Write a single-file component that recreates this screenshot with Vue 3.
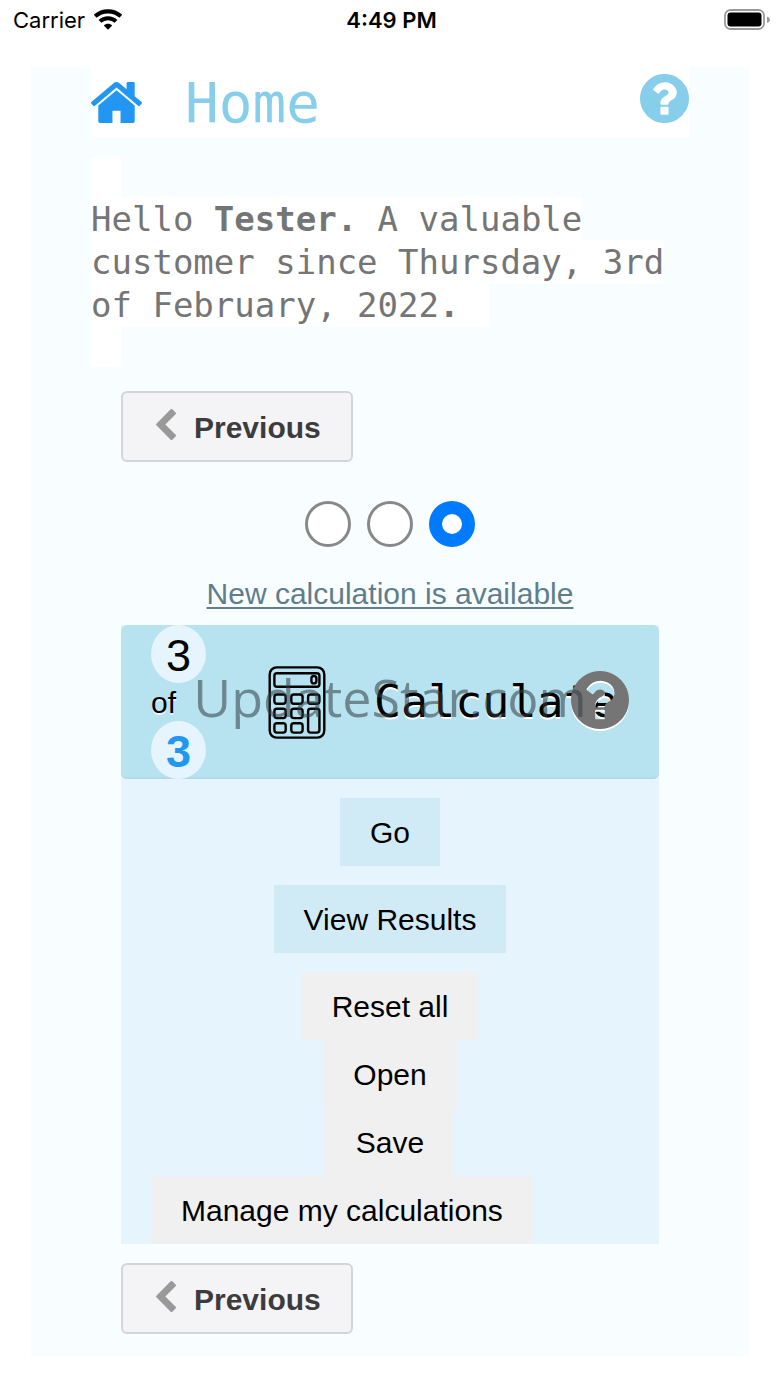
<script setup>
import { ref } from 'vue'

const step = ref(3)
const steps = [1, 2, 3]

const help =
  'M1024 1376v-192q0-14-9-23t-23-9h-192q-14 0-23 9t-9 23v192q0 14 9 23t23 9h192q14 0 23-9t9-23zm256-672q0-88-55.5-163t-138.5-116-170-41q-243 0-371 213-15 24 8 42l132 100q7 6 19 6 16 0 25-12 53-68 86-92 34-24 86-24 48 0 85.5 26t37.5 59q0 38-20 61t-68 45q-63 28-115.5 86.5t-52.5 125.5v36q0 14 9 23t23 9h192q14 0 23-9t9-23q0-19 21.5-49.5t54.5-49.5q32-18 49-28.5t46-35 44.5-48 28-60.5 12.5-81zm384 192q0 209-103 385.5t-279.5 279.5-385.5 103-385.5-103-279.5-279.5-103-385.5 103-385.5 279.5-279.5 385.5-103 385.5 103 279.5 279.5 103 385.5z'
const chevron =
  'M1427 301l-531 531 531 531q19 19 19 45t-19 45l-166 166q-19 19-45 19t-45-19l-742-742q-19-19-19-45t19-45l742-742q19-19 45-19t45 19l166 166q19 19 19 45t-19 45z'
</script>

<template>
  <div class="screen">
    <div class="status">
      <div class="carrier">
        <span>Carrier</span>
        <svg class="wifi" viewBox="0 0 28 21" aria-hidden="true">
          <path d="M1.200 7.300C8.500 .6 19.500 .6 26.800 7.300" fill="none" stroke="#000" stroke-width="4.200" />
          <path d="M6 12.400C10.500 8.200 17.500 8.200 22 12.400" fill="none" stroke="#000" stroke-width="4" />
          <path d="M14 20.800L9.800 16.600C12 14.200 16 14.200 18.200 16.600Z" fill="#000" />
        </svg>
      </div>
      <div class="time">4:49 PM</div>
      <div class="power">
        <svg class="battery" viewBox="0 0 46 21" aria-hidden="true">
          <rect x="1" y="1" width="39" height="19" rx="5.500" fill="#fff" stroke="#999" stroke-width="1.800" />
          <rect x="3.500" y="3.500" width="34" height="14" rx="3" fill="#000" />
          <path d="M43 7.500q3 1 3 3.200t-3 3.200z" fill="#999" />
        </svg>
      </div>
    </div>

    <main class="page">
      <header class="bar">
        <a href="#" class="home" aria-label="Home">
          <svg viewBox="89 253 1614 1283" preserveAspectRatio="none" aria-hidden="true">
            <path fill="#2196f3" d="M1472 992v480q0 26-19 45t-45 19h-384v-384h-256v384h-384q-26 0-45-19t-19-45v-480q0-1 .5-3t.5-3l575-474 575 474q1 2 1 6zm223-69l-62 74q-8 9-21 11h-3q-13 0-21-7l-692-577-692 577q-12 8-24 7-13-2-21-11l-62-74q-8-10-7-23.500t11-21.500l719-599q32-26 76-26t76 26l244 204v-195q0-14 9-23t23-9h192q14 0 23 9t9 23v408l219 182q10 8 11 21.500t-7 23.500z" />
          </svg>
        </a>
        <h1>Home</h1>
        <button type="button" class="help" aria-label="Help">
          <svg viewBox="128 128 1536 1536" aria-hidden="true"><path fill="#87ceeb" :d="help" /></svg>
        </button>
      </header>

      <div class="greeting">
        <p><span>Hello <b>Tester.</b> A valuable customer since Thursday, 3rd of February, 2022<b>.</b></span></p>
      </div>

      <section class="content">
        <button type="button" class="previous">
          <svg viewBox="410 26 1036 1612" aria-hidden="true"><path fill="#999" :d="chevron" /></svg>
          <span>Previous</span>
        </button>

        <div class="steps" role="radiogroup" aria-label="Step">
          <input v-for="n in steps" :key="n" v-model="step" type="radio" name="step" :value="n" :aria-label="'Step ' + n" />
        </div>

        <a href="#" class="notice">New calculation is available</a>

        <article class="card">
          <div class="card-head">
            <div class="count">
              <span class="badge">3</span>
              <span class="of">of</span>
              <span class="badge total">3</span>
            </div>
            <svg class="calculator" viewBox="0 0 58 73" fill="none" stroke="#000" stroke-width="2.400" aria-hidden="true">
              <rect x="1.700" y="1.400" width="54.600" height="70.200" rx="7" />
              <rect x="6.400" y="7.200" width="45" height="13.600" rx="2.500" />
              <rect x="43.400" y="10" width="5" height="7.400" rx="2.500" />
              <rect x="6.400" y="28.500" width="11.300" height="9.200" rx="2.500" />
              <rect x="23.300" y="28.500" width="11.300" height="9.200" rx="2.500" />
              <rect x="40.100" y="28.500" width="11.300" height="9.200" rx="2.500" />
              <rect x="6.400" y="42.700" width="11.300" height="9.400" rx="2.500" />
              <rect x="23.300" y="42.700" width="11.300" height="9.400" rx="2.500" />
              <rect x="6.400" y="57.200" width="11.300" height="9.400" rx="2.500" />
              <rect x="23.300" y="57.200" width="11.300" height="9.400" rx="2.500" />
              <rect x="40.100" y="42.700" width="11.300" height="23.900" rx="2.500" />
            </svg>
            <h2>Calculate</h2>
            <button type="button" class="card-help" aria-label="Help with Calculate">
              <svg viewBox="128 128 1536 1536" aria-hidden="true"><path fill="#757575" :d="help" /></svg>
            </button>
            <div class="watermark">UpdateStar.com</div>
          </div>
          <div class="card-body">
            <button type="button" class="action main">Go</button>
            <button type="button" class="action main">View Results</button>
            <button type="button" class="action">Reset all</button>
            <button type="button" class="action">Open</button>
            <button type="button" class="action">Save</button>
            <button type="button" class="action start">Manage my calculations</button>
          </div>
        </article>

        <button type="button" class="previous">
          <svg viewBox="410 26 1036 1612" aria-hidden="true"><path fill="#999" :d="chevron" /></svg>
          <span>Previous</span>
        </button>
      </section>
    </main>
  </div>
</template>

<style>
body {
  margin: 0;
  background: #fff;
}
</style>

<style scoped>
.screen {
  font-family: "Liberation Sans", Arial, sans-serif;
  font-size: 30px;
  color: #000;
}
button {
  margin: 0;
  padding: 0;
  border: 0;
  background: none;
  font: inherit;
  color: inherit;
}
svg {
  display: block;
}
.status {
  display: grid;
  grid-template-columns: 1fr auto 1fr;
  align-items: center;
  height: 40px;
  padding: 0 10px 0 13px;
  margin-bottom: 27px;
  font-family: Inter, sans-serif;
  font-size: 22px;
}
.carrier {
  display: flex;
  align-items: center;
  gap: 9px;
}
.wifi {
  width: 28px;
  height: 21px;
  margin-bottom: 2px;
}
.time {
  font-weight: 600;
}
.power {
  display: flex;
  justify-content: flex-end;
}
.battery {
  width: 46px;
  height: 21px;
  margin-bottom: 2px;
}
.page {
  margin: 0 31px;
  padding: 0 60px 22px;
  background: #f8feff;
}
.bar {
  display: flex;
  align-items: flex-start;
  height: 70px;
  background: #fff;
}
.home {
  margin-top: 15px;
}
.home svg {
  width: 51px;
  height: 41px;
}
h1 {
  flex: 1;
  margin: 0 0 0 43px;
  font: 400 56px/72px "DejaVu Sans Mono", monospace;
  color: #87ceeb;
}
.help {
  margin-top: 7px;
}
.help svg {
  width: 49px;
  height: 49px;
}
.greeting {
  margin: 21px 0 24px;
  font: 34px/43px "DejaVu Sans Mono", monospace;
  color: #757575;
}
.greeting::before,
.greeting::after {
  content: "";
  display: block;
  width: 30px;
  height: 40px;
  background: #fff;
}
.greeting p {
  margin: 0;
}
.greeting span {
  padding: 2px 30px 2px 0;
  background: #fff;
}
.content {
  display: flex;
  flex-direction: column;
  align-items: flex-start;
  padding: 0 30px;
}
.previous {
  display: flex;
  align-items: center;
  gap: 18px;
  height: 71px;
  padding: 2px 30px 0 33px;
  border: 2px solid #d3d6d8;
  border-radius: 6px;
  background: #f4f4f6;
  font-weight: 700;
  color: #3c3c3e;
}
.previous svg {
  width: 20px;
  height: 31px;
  margin-bottom: 6px;
}
.steps {
  display: flex;
  align-self: center;
  gap: 16px;
  margin: 39px 0 30px;
}
.steps input {
  appearance: none;
  width: 46px;
  height: 46px;
  margin: 0;
  border: 3px solid #888;
  border-radius: 50%;
  background: #fff;
}
.steps input:checked {
  border: 13px solid #007aff;
}
.notice {
  align-self: center;
  line-height: 34px;
  color: #607d8b;
  text-decoration-thickness: 2px;
  text-underline-offset: 3px;
}
.card {
  align-self: stretch;
  margin: 14px 0 19px;
  background: #e6f4fd;
}
.card-head {
  position: relative;
  display: flex;
  align-items: center;
  padding: 0 30px;
  border-radius: 6px;
  background: #b7e3f1;
  box-shadow: inset 0 -2px #b2daeb;
}
.count {
  display: flex;
  flex-direction: column;
}
.badge {
  width: 55px;
  border-radius: 50%;
  background: #e6f4fd;
  font-size: 45px;
  line-height: 62px;
  height: 58px;
  text-align: center;
}
.total {
  font-weight: 700;
  color: #2196f3;
}
.of {
  line-height: 40px;
  height: 38px;
  text-shadow: 0 2px #e6f4fd;
}
.calculator {
  flex: none;
  width: 58px;
  height: 73px;
  margin: 0 48px 0 62px;
}
h2 {
  margin: 0;
  font: 400 45px/54px "DejaVu Sans Mono", monospace;
  text-shadow: 0 2px #fff;
}
.card-help {
  position: absolute;
  right: 30px;
  top: 46px;
}
.card-help svg {
  width: 58px;
  height: 58px;
  filter: drop-shadow(0 2px 0 #fff);
}
.watermark {
  position: absolute;
  inset: 0;
  display: flex;
  align-items: center;
  justify-content: center;
  padding-bottom: 10px;
  font: 52px/60px "Open Sans", sans-serif;
  color: rgba(50, 60, 65, 0.55);
  pointer-events: none;
}
.card-body {
  display: flex;
  flex-direction: column;
  align-items: center;
  padding: 19px 30px 0;
}
.action {
  padding: 18px 30px 16px;
  background: #f0f0f0;
  line-height: 34px;
}
.main {
  margin-bottom: 19px;
  background: #d1ebf6;
}
.start {
  align-self: flex-start;
}
</style>
